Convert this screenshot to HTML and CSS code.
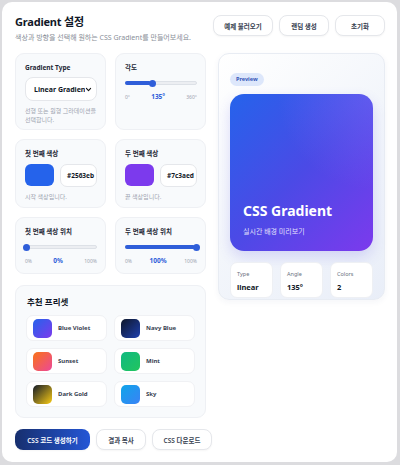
FILE: index.html
```html
<!DOCTYPE html>
<html lang="ko">
<head>
<meta charset="utf-8">
<link rel="stylesheet" href="styles.css">
</head>
<body>
<div class="app">
  <header class="header">
    <div class="titles">
      <h1 class="title">Gradient 설정</h1>
      <p class="subtitle">색상과 방향을 선택해 원하는 CSS Gradient를 만들어보세요.</p>
    </div>
    <div class="header-actions">
      <button class="btn">예제 불러오기</button>
      <button class="btn">랜덤 생성</button>
      <button class="btn">초기화</button>
    </div>
  </header>

  <div class="main">
    <div class="left">
      <div class="controls">
        <div class="card">
          <div class="label">Gradient Type</div>
          <div class="select"><span class="select-text">Linear Gradient</span><svg class="chev" viewBox="0 0 10 10" width="7" height="7"><path d="M2 3.5 L5 6.5 L8 3.5" fill="none" stroke="#111" stroke-width="1.6" stroke-linecap="round" stroke-linejoin="round"/></svg></div>
          <p class="help">선형 또는 원형 그라데이션을 선택합니다.</p>
        </div>
        <div class="card">
          <div class="label">각도</div>
          <div class="slider"><div class="fill" style="width:37.5%"></div><div class="thumb" style="left:37.5%"></div></div>
          <div class="scale"><span>0°</span><b>135°</b><span>360°</span></div>
        </div>
        <div class="card">
          <div class="label">첫 번째 색상</div>
          <div class="color-row"><div class="swatch" style="background:#2563eb"></div><div class="hex">#2563eb</div></div>
          <p class="help">시작 색상입니다.</p>
        </div>
        <div class="card">
          <div class="label">두 번째 색상</div>
          <div class="color-row"><div class="swatch" style="background:#7c3aed"></div><div class="hex">#7c3aed</div></div>
          <p class="help">끝 색상입니다.</p>
        </div>
        <div class="card">
          <div class="label">첫 번째 색상 위치</div>
          <div class="slider"><div class="fill" style="width:0%"></div><div class="thumb" style="left:0%"></div></div>
          <div class="scale"><span>0%</span><b>0%</b><span>100%</span></div>
        </div>
        <div class="card">
          <div class="label">두 번째 색상 위치</div>
          <div class="slider"><div class="fill" style="width:100%"></div><div class="thumb" style="left:100%"></div></div>
          <div class="scale"><span>0%</span><b>100%</b><span>100%</span></div>
        </div>
      </div>

      <div class="card presets">
        <div class="presets-title">추천 프리셋</div>
        <div class="preset-grid">
          <div class="preset"><div class="p-sw" style="background:linear-gradient(135deg,#2563eb,#7c3aed)"></div><span>Blue Violet</span></div>
          <div class="preset"><div class="p-sw" style="background:linear-gradient(135deg,#0f172a,#1e40af)"></div><span>Navy Blue</span></div>
          <div class="preset"><div class="p-sw" style="background:linear-gradient(135deg,#f97316,#ec4899)"></div><span>Sunset</span></div>
          <div class="preset"><div class="p-sw" style="background:linear-gradient(135deg,#10b981,#22c55e)"></div><span>Mint</span></div>
          <div class="preset"><div class="p-sw" style="background:linear-gradient(135deg,#111827,#facc15)"></div><span>Dark Gold</span></div>
          <div class="preset"><div class="p-sw" style="background:linear-gradient(135deg,#0ea5e9,#3b82f6)"></div><span>Sky</span></div>
        </div>
      </div>
    </div>

    <div class="right">
      <div class="preview-panel">
        <span class="badge">Preview</span>
        <div class="preview">
          <div class="preview-title">CSS Gradient</div>
          <div class="preview-sub">실시간 배경 미리보기</div>
        </div>
        <div class="stats">
          <div class="stat"><div class="stat-k">Type</div><div class="stat-v">linear</div></div>
          <div class="stat"><div class="stat-k">Angle</div><div class="stat-v">135°</div></div>
          <div class="stat"><div class="stat-k">Colors</div><div class="stat-v">2</div></div>
        </div>
      </div>
    </div>
  </div>

  <div class="footer">
    <button class="btn primary">CSS 코드 생성하기</button>
    <button class="btn">결과 복사</button>
    <button class="btn">CSS 다운로드</button>
  </div>
</div>
</body>
</html>
```

FILE: styles.css
```css
* { box-sizing: border-box; }
html, body { margin: 0; padding: 0; }
body {
  background: #dcdcdf;
  font-family: "Noto Sans", "Noto Sans CJK KR", sans-serif;
  color: #111827;
  width: 400px;
  height: 465px;
  overflow: hidden;
}
.app {
  margin: 2px 3px 3px 2px;
  height: 460px;
  background: #fff;
  border-radius: 10px;
  padding: 12px 12px 0 13px;
}
.header {
  display: flex;
  justify-content: space-between;
  align-items: flex-start;
}
.title {
  margin: 0;
  font-size: 11px;
  font-weight: 700;
  line-height: 16px;
  letter-spacing: -0.2px;
}
.subtitle {
  margin: 3px 0 0;
  font-size: 7px;
  color: #8a8f99;
  line-height: 9px;
}
.header-actions { display: flex; gap: 6px; margin-top: 1px; }
.btn {
  font-family: inherit;
  font-size: 6.5px;
  font-weight: 600;
  color: #374151;
  background: #fff;
  border: 1px solid #e5e7eb;
  border-radius: 8px;
  height: 21px;
  padding: 0;
  box-shadow: 0 1px 2px rgba(0,0,0,0.04);
}
.header-actions .btn { width: 50px; }
.header-actions .btn:first-child { width: 60px; }

.main {
  display: grid;
  grid-template-columns: 191px 167px;
  gap: 12px;
  margin-top: 11px;
}
.left { display: flex; flex-direction: column; gap: 11px; }
.controls {
  display: grid;
  grid-template-columns: 91px 91px;
  grid-template-rows: 77px 69px 57px;
  gap: 9px;
}
.card {
  background: #f8fafc;
  border: 1px solid #eef0f4;
  border-radius: 9px;
  padding: 9px 8px 8px 9px;
}
.label {
  font-size: 6.5px;
  font-weight: 700;
  line-height: 9px;
  color: #1f2937;
}
.select {
  margin-top: 5px;
  height: 24px;
  background: #fff;
  border: 1px solid #e5e7eb;
  border-radius: 8px;
  display: flex;
  align-items: center;
  justify-content: space-between;
  padding: 0 5px 0 8px;
}
.select-text { font-size: 7px; font-weight: 700; white-space: nowrap; overflow: hidden; width: 51px; flex: none; }
.chev { flex: none; }
.help {
  margin: 6px 0 0;
  font-size: 6px;
  line-height: 9px;
  color: #9ca3af;
  word-break: keep-all;
}
.slider {
  position: relative;
  margin: 9px 0 0;
  height: 4px;
  background: #eceef2;
  border: 1px solid #dde1e7;
  border-radius: 3px;
}
.fill {
  position: absolute;
  left: -1px; top: -1px; bottom: -1px;
  background: #2f5ed9;
  border-radius: 3px;
}
.thumb {
  position: absolute;
  top: 50%;
  width: 7px; height: 7px;
  margin: -3.5px 0 0 -3.5px;
  border-radius: 50%;
  background: #2f5ed9;
}
.scale {
  margin-top: 7px;
  display: flex;
  justify-content: space-between;
  align-items: center;
  font-size: 5px;
  color: #9ca3af;
}
.scale b { font-size: 6.5px; color: #2f5ed9; font-weight: 700; }
.color-row { margin-top: 6px; display: flex; gap: 6px; }
.swatch { width: 30px; height: 22px; border-radius: 6px; }
.hex {
  width: 38px; height: 23px;
  background: #fff;
  border: 1px solid #e5e7eb;
  border-radius: 7px;
  font-size: 6.5px;
  font-weight: 700;
  display: flex; align-items: center;
  padding-left: 6px;
  overflow: hidden;
  white-space: nowrap;
}
.presets { padding: 10px 10px 10px 10px; }
.presets-title { font-size: 8.5px; font-weight: 700; line-height: 12px; margin-left: 1px; }
.preset-grid {
  margin-top: 7px;
  display: grid;
  grid-template-columns: 81px 81px;
  gap: 7px 7px;
}
.preset {
  height: 26px;
  background: #fff;
  border: 1px solid #f0f1f4;
  border-radius: 7px;
  display: flex;
  align-items: center;
  gap: 6px;
  padding-left: 6px;
}
.p-sw { width: 19px; height: 19px; border-radius: 5px; flex: none; }
.preset span { font-size: 6px; font-weight: 700; color: #374151; }

.preview-panel {
  height: 247px;
  border: 1px solid #e8ecf3;
  border-radius: 11px;
  background: linear-gradient(135deg, #ffffff 0%, #f3f6fb 50%, #e9eef8 100%);
  padding: 10px 11px 12px 11px;
  box-shadow: 0 2px 6px rgba(30,60,120,0.05);
}
.badge {
  display: inline-block;
  font-size: 5.5px;
  font-weight: 700;
  color: #3355b8;
  background: #dde7fb;
  border-radius: 7px;
  padding: 0 6px;
  line-height: 13px;
}
.preview {
  margin-top: 8px;
  height: 157px;
  border-radius: 14px;
  background:
    radial-gradient(circle at 100% 0%, rgba(140,120,255,0.35), rgba(140,120,255,0) 45%),
    linear-gradient(135deg, #2563eb 0%, #4b4ae6 50%, #7c3aed 100%);
  box-shadow: 0 6px 14px rgba(80,70,230,0.18);
  padding: 0 12px 0 13px;
  display: flex;
  flex-direction: column;
  justify-content: flex-end;
  padding-bottom: 14px;
  color: #fff;
}
.preview-title { font-size: 14px; font-weight: 700; line-height: 18px; }
.preview-sub { font-size: 7px; margin-top: 7px; color: rgba(255,255,255,0.85); line-height: 10px; }
.stats {
  margin-top: 11px;
  display: grid;
  grid-template-columns: repeat(3, 1fr);
  gap: 7px;
}
.stat {
  height: 36px;
  background: #fff;
  border: 1px solid #eef0f4;
  border-radius: 7px;
  padding: 7px 6px;
}
.stat-k { font-size: 5.5px; color: #6b7280; line-height: 8px; }
.stat-v { font-size: 7.5px; font-weight: 700; margin-top: 5px; line-height: 9px; }

.footer {
  margin-top: 11px;
  display: flex;
  gap: 6px;
}
.footer .btn { height: 21px; }
.footer .btn:nth-child(2) { width: 50px; }
.footer .btn:nth-child(3) { width: 60px; }
.btn.primary {
  width: 75px;
  color: #fff;
  border: none;
  background: linear-gradient(90deg, #172f6e, #2456d6);
}
```
